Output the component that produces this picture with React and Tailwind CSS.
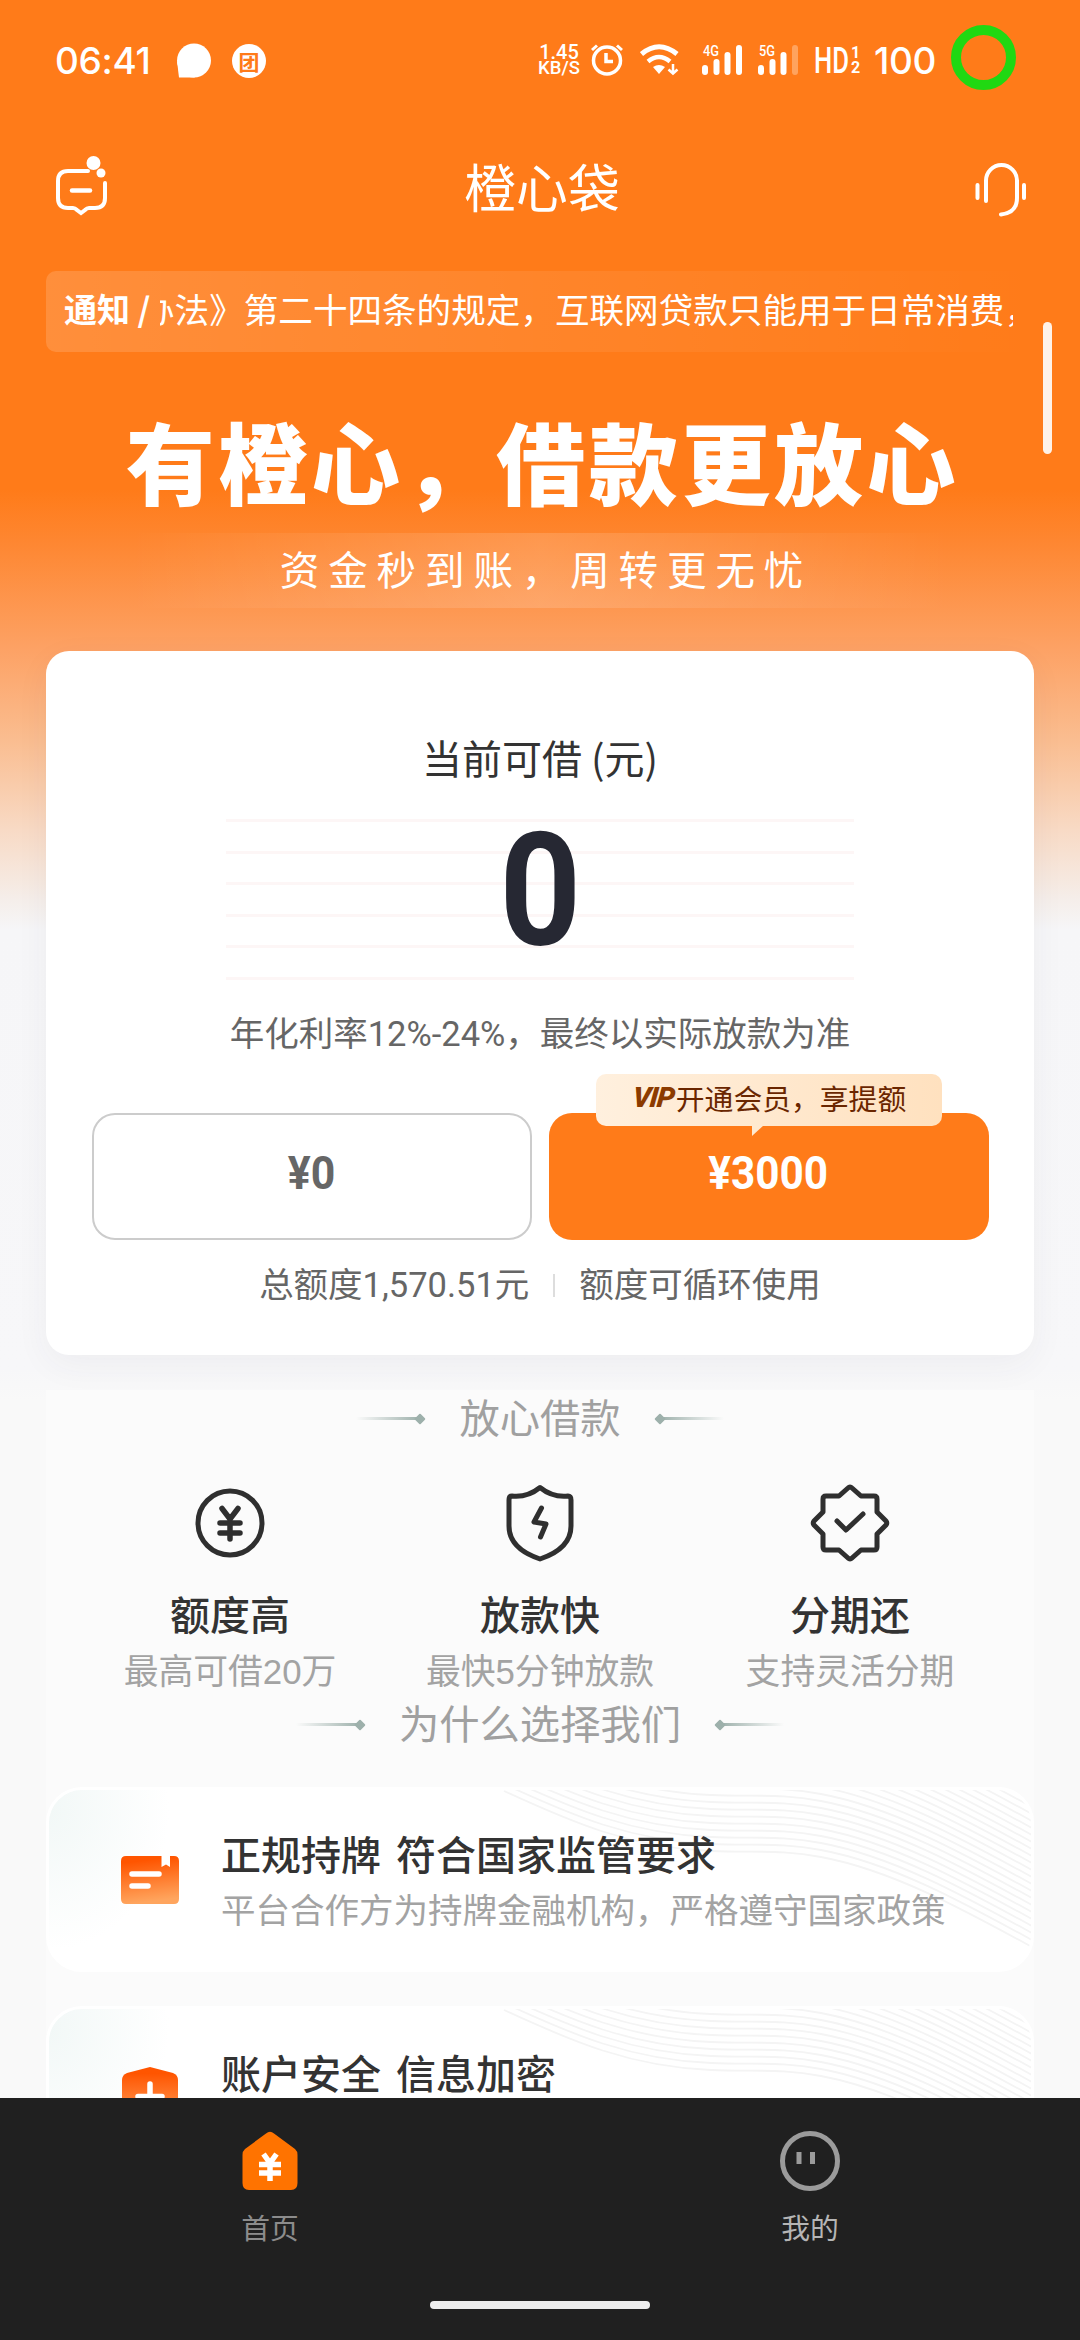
import React from 'react';

const features = [
  { title: '额度高', desc: '最高可借20万', icon: <YenIcon /> },
  { title: '放款快', desc: '最快5分钟放款', icon: <ShieldIcon /> },
  { title: '分期还', desc: '支持灵活分期', icon: <BadgeIcon /> },
];

const reasons = [
  { title: '正规持牌 符合国家监管要求', desc: '平台合作方为持牌金融机构，严格遵守国家政策', icon: <LicenseIcon /> },
  { title: '账户安全 信息加密', icon: <SafeIcon /> },
];

// --- ICONS ---
function YenIcon() {
  return (
    <svg width="80" height="80" viewBox="-40 -40 80 80" fill="none" stroke="#2f2f2f" strokeLinecap="round" strokeLinejoin="round">
      <circle r="32" strokeWidth="5" />
      <path d="M-8 -14.500L0 -4L8 -14.500M0 -4V16M-10 0H10M-10 10H10" strokeWidth="5.500" />
    </svg>
  );
}

function ShieldIcon() {
  return (
    <svg width="80" height="80" viewBox="-40 -40 80 80" fill="none" stroke="#2f2f2f" strokeLinecap="round" strokeLinejoin="round">
      <path d="M0 -35.500C-8 -29 -18 -26 -28 -27Q-31 -27 -31 -23V3C-31 20 -18 30 0 36C18 30 31 20 31 3V-23Q31 -27 28 -27C18 -26 8 -29 0 -35.500Z" strokeWidth="5" />
      <path d="M1.500 -15L-6 -1L6 1L0.500 14" strokeWidth="5" />
    </svg>
  );
}

function BadgeIcon() {
  return (
    <svg width="80" height="80" viewBox="-40 -40 80 80" fill="none" stroke="#2f2f2f" strokeLinecap="round" strokeLinejoin="round">
      <path d="M-2 -35Q0 -37 2 -35L11 -27H24Q27 -27 27 -24V-11L36 -2Q37.500 0 36 2L27 11V24Q27 27 24 27H11L2 35Q0 37 -2 35L-11 27H-24Q-27 27 -27 24V11L-36 2Q-37.500 0 -36 -2L-27 -11V-24Q-27 -27 -24 -27H-11Z" strokeWidth="5" />
      <path d="M-13 -2L-4 7L13 -9" strokeWidth="5" />
    </svg>
  );
}

function LicenseIcon() {
  return (
    <svg width="58" height="48" viewBox="0 0 58 48">
      <defs>
        <linearGradient id="license" x1="0" y1="0" x2="0.15" y2="1">
          <stop offset="0.15" stopColor="#ff5500" />
          <stop offset="1" stopColor="#ffa55e" />
        </linearGradient>
      </defs>
      <path d="M5 0H40.500V11L45 8.500L49 11V0H53Q58 0 58 5V43Q58 48 53 48H5Q0 48 0 43V5Q0 0 5 0Z" fill="url(#license)" />
      <path d="M11 18H38M11 30H27" stroke="#fff" strokeWidth="5.500" strokeLinecap="round" />
    </svg>
  );
}

function SafeIcon() {
  return (
    <svg className="-mt-[8px]" width="56" height="64" viewBox="0 0 56 64">
      <defs>
        <linearGradient id="safe" x1="0" y1="0" x2="0" y2="1">
          <stop offset="0.1" stopColor="#ff5500" />
          <stop offset="1" stopColor="#ffb070" />
        </linearGradient>
      </defs>
      <path d="M28 0L51 6Q56 8 56 13V36Q54 54 28 64Q2 54 0 36V13Q0 8 5 6Z" fill="url(#safe)" />
      <path d="M28 17V42M16 29.500H40" stroke="#fff" strokeWidth="5.500" strokeLinecap="round" />
    </svg>
  );
}

// --- STATUS BAR ---
const Signal = ({ label, weak }) => (
  <svg width="41" height="30" viewBox="0 0 41 30" fill="#fff">
    <text x="1" y="11" fontSize="14" fontWeight="500" fontFamily="Roboto, sans-serif" textLength="16" lengthAdjust="spacingAndGlyphs">{label}</text>
    <rect x="0" y="20" width="6" height="10" rx="3" />
    <rect x="11.500" y="14" width="6" height="16" rx="3" />
    <rect x="22.500" y="7" width="6" height="23" rx="3" />
    <rect x="34" y="0" width="6" height="30" rx="3" opacity={weak ? 0.3 : 1} />
  </svg>
);

const StatusBar = () => (
  <div className="flex h-[115px] shrink-0 items-start pl-[55px] text-white">
    <div className="mt-[38px] w-[121px] font-[Inter,sans-serif] text-[37px] leading-[46px] font-medium tracking-[-0.3px]">06:41</div>
    <svg className="mt-[43px]" width="35" height="36" viewBox="0 0 35 36" fill="#fff">
      <circle cx="18" cy="17.500" r="17" />
      <path d="M1 18L3 34.500L19 34.500Z" />
    </svg>
    <div className="mt-[44px] ml-[21px] flex h-[34px] w-[34px] items-center justify-center rounded-full bg-white text-[21px] leading-[30px] font-bold text-[#ff7b19]">团</div>

    <div className="mt-[44px] ml-[272px] flex w-[42px] flex-col items-center font-[Roboto,sans-serif] text-[20px] leading-[16px] font-medium">
      <span>1.45</span>
      <span className="text-[18.5px]">KB/S</span>
    </div>
    <svg className="mt-[44px] ml-[11px]" width="32" height="32" viewBox="0 0 32 32" fill="none" stroke="#fff">
      <circle cx="16" cy="16.500" r="13.500" strokeWidth="3.500" />
      <path d="M15 9V17.500H22" strokeWidth="3.500" />
      <path d="M1 6L6 1.500M31 6L26 1.500" strokeWidth="3" />
    </svg>
    <svg className="mt-[44px] ml-[17px]" width="40" height="32" viewBox="0 0 40 32" fill="none" stroke="#fff">
      <path d="M1.500 10Q19 -4.500 37 10" strokeWidth="5" />
      <path d="M8 17.500Q19 8.500 30 17.500" strokeWidth="4.500" />
      <path d="M13 23Q19 19 25 23L19 30Z" fill="#fff" stroke="none" />
      <path d="M33 20V29M28.500 25.500L33 29.500L37.500 25.500" strokeWidth="2.500" />
    </svg>
    <div className="mt-[45px] ml-[22px] flex gap-[15px]">
      <Signal label="4G" />
      <Signal label="5G" weak />
    </div>
    <svg className="mt-[44px] ml-[15px]" width="46" height="32" viewBox="0 0 46 32" fill="#fff" fontFamily="Roboto, sans-serif" fontWeight="500">
      <text x="0" y="28.500" fontSize="36" textLength="35" lengthAdjust="spacingAndGlyphs">HD</text>
      <text x="37" y="13.500" fontSize="16" fontWeight="700">1</text>
      <text x="37" y="29" fontSize="16" fontWeight="700">2</text>
    </svg>
    <div className="mt-[38px] ml-[14px] w-[65px] font-[Inter,sans-serif] text-[37px] leading-[46px] font-medium tracking-[-0.4px]">100</div>
    <div className="mt-[25px] ml-[12px] h-[65px] w-[65px] rounded-full border-[10px] border-[#20d812]"></div>
  </div>
);

const Header = () => (
  <div className="flex h-[156px] shrink-0 items-start justify-between pr-[53px] pl-[55px] text-white">
    <svg className="mt-[40px]" width="54" height="61" viewBox="0 0 54 61" fill="none" stroke="#fff" strokeWidth="4" strokeLinecap="round">
      <path d="M33 16H13Q3 16 3 26V43Q3 53 13 53H18Q20 53 22 55L26 58L30 55Q32 53 34 53H40Q50 53 50 43V28" />
      <path d="M17 35.500H35" strokeWidth="4.500" />
      <circle cx="38.500" cy="8" r="7" fill="#fff" stroke="none" />
      <circle cx="46" cy="18" r="4.500" fill="#fff" stroke="none" />
    </svg>
    <h1 className="mt-[33px] text-[51.8px] leading-[76px]">橙心袋</h1>
    <svg className="mt-[48px]" width="52" height="55" viewBox="0 0 52 55" fill="none" stroke="#fff" strokeWidth="4" strokeLinecap="round">
      <path d="M11 38V17.500A15 15 0 0 1 42 17.500V35Q42 50 26 51.500" />
      <path d="M2.500 22V35M49 22V35" />
    </svg>
  </div>
);

const Notice = () => (
  <div className="mx-[46px] flex h-[81px] shrink-0 rounded-[10px] bg-linear-to-r from-white/15 to-white/0 pl-[18px] text-white">
    <div className="w-[96px] shrink-0 text-[33px] leading-[74px] font-bold whitespace-nowrap">通知 /</div>
    <div className="w-[853px] overflow-hidden">
      <p className="-ml-[20px] text-[34.6px] leading-[74px] whitespace-nowrap">办法》第二十四条的规定，互联网贷款只能用于日常消费，</p>
    </div>
  </div>
);

const Banner = () => (
  <div className="flex h-[299px] shrink-0 flex-col items-center text-white">
    <h2 className="mt-[43px] h-[138px] pl-[5px] text-[89px] leading-[130px] font-black tracking-[3.6px] whitespace-nowrap">有橙心，借款更放心</h2>
    <div className="h-[75px] w-[820px] bg-linear-to-r from-white/0 via-white/15 to-white/0 text-center">
      <p className="pl-[12px] text-[39.5px] leading-[70px] tracking-[8.9px]">资金秒到账，周转更无忧</p>
    </div>
  </div>
);

const QuotaCard = () => (
  <div className="mx-[46px] flex h-[704px] shrink-0 flex-col items-center rounded-[23px] bg-white pt-[76px] shadow-[0_10px_34px_rgba(60,60,80,0.05)]">
    <div className="h-[92px] text-[40px] leading-[60px] text-[#333]">当前可借 (元)</div>
    <div className="flex h-[163px] w-[628px] justify-center bg-[repeating-linear-gradient(to_bottom,#fdf6f6_0,#fdf6f6_3px,transparent_3px,transparent_31.6px)]">
      <span className="-mt-[9px] scale-x-[0.9] font-[Roboto,sans-serif] text-[158px] leading-[160px] font-bold text-[#262833]">0</span>
    </div>
    <p className="mt-[26px] font-[Roboto,'Noto_Sans_CJK_SC',sans-serif] text-[34.5px] leading-[52px] text-[#666]">年化利率12%-24%，最终以实际放款为准</p>
    <div className="mt-[53px] flex gap-[17px]">
      <button className="h-[127px] w-[440px] rounded-[23px] border-2 border-[#ccc] pb-[7px] text-[#666]">
        <span className="inline-block scale-x-[0.93] font-[Roboto,sans-serif] text-[46px] font-bold">¥0</span>
      </button>
      <button className="relative h-[127px] w-[440px] rounded-[23px] bg-[#ff7b19] pb-[7px] text-white">
        <span className="inline-block scale-x-[0.92] font-[Roboto,sans-serif] text-[46px] font-bold">¥3000</span>
        <span className="absolute -top-[39px] left-[47px] flex h-[52px] w-[346px] items-center justify-center rounded-[10px] bg-linear-to-r from-[#fff0de] to-[#ffe1bf] pb-[5px] text-[28.8px] leading-[47px] whitespace-nowrap text-[#6a2600]">
          <b className="w-[45px] -skew-x-6 font-[Roboto,sans-serif] text-[28px] font-black tracking-[-1px] text-[#8c3b00] italic">VIP</b>
          开通会员，享提额
          <svg className="absolute top-[51px] left-[156px]" width="12" height="11" viewBox="0 0 12 11" fill="#ffe9d0">
            <path d="M0 0H12L0 11Z" />
          </svg>
        </span>
      </button>
    </div>
    <div className="mt-[19px] flex items-center font-[Roboto,'Noto_Sans_CJK_SC',sans-serif] text-[34.5px] leading-[52px] text-[#666]">
      <span>总额度1,570.51元</span>
      <span className="mx-6 h-[23px] w-[2px] bg-[#ddd]"></span>
      <span>额度可循环使用</span>
    </div>
  </div>
);

const SectionTitle = ({ children }) => (
  <div className="flex h-[57px] items-center justify-center gap-[35px] text-[40.3px] leading-[60px] text-[#a0a0a0]">
    <TitleMark />
    <span className="pb-[6px]">{children}</span>
    <TitleMark flip />
  </div>
);

const TitleMark = ({ flip }) => (
  <div className={flip ? 'flex rotate-180 items-center' : 'flex items-center'}>
    <span className="h-[3px] w-[64px] bg-linear-to-r from-[#9db0ab]/0 to-[#9db0ab]"></span>
    <span className="-ml-[4px] h-[8px] w-[8px] rotate-45 rounded-[1px] bg-[#9db0ab]"></span>
  </div>
);

const Waves = () => (
  <svg className="absolute top-0 right-0" width="540" height="179" viewBox="0 0 540 179" fill="none" stroke="#f4f4f4" strokeWidth="1.800">
    {Array.from({ length: 22 }).map((_, i) => (
      <path key={i} transform={`translate(0 ${-i * 7})`} d="M13 1C80 32 140 58 220 61C260 63 290 59 330 67C400 80 470 118 550 162" />
    ))}
  </svg>
);

const ReasonCard = ({ item }) => (
  <div className="relative flex h-[185px] shrink-0 overflow-hidden rounded-[36px] border-[3px] border-white bg-[radial-gradient(ellipse_120px_140px_at_0_20px,#f2f8f7,#ffffff)]">
    <Waves />
    <div className="relative flex w-[172px] shrink-0 items-start justify-center pt-[66px] pl-[30px]">{item.icon}</div>
    <div className="relative pt-[33px] whitespace-nowrap">
      <h3 className="text-[40px] leading-[60px] font-medium text-[#333] [word-spacing:6px]">{item.title}</h3>
      {item.desc && <p className="text-[34.5px] leading-[50px] text-[#a3a3a3]">{item.desc}</p>}
    </div>
  </div>
);

const NavItem = ({ label, className, children }) => (
  <div className="flex flex-1 flex-col items-center pt-[32px]">
    {children}
    <span className={className}>{label}</span>
  </div>
);

const BottomNav = () => (
  <nav className="h-[242px] shrink-0 bg-[#202020]">
    <div className="flex h-[203px]">
      <NavItem label="首页" className="mt-[15px] text-[28.8px] leading-[40px] text-[#8c8c8c]">
        <svg width="60" height="62" viewBox="0 0 60 62">
          <path d="M26 3.500Q30 0 34 3.500L55 19Q57.500 21 57.500 25V53Q57.500 60 51 60H9Q2.500 60 2.500 53V25Q2.500 21 5 19Z" fill="#ff7300" />
          <path d="M23.500 24L30 33L36.500 24M30 33V51M19 34.500H41M19 43H41" stroke="#fff" strokeWidth="5.500" fill="none" />
        </svg>
      </NavItem>
      <NavItem label="我的" className="mt-[15px] text-[28.8px] leading-[40px] text-[#b5b5b5]">
        <svg width="62" height="62" viewBox="0 0 62 62">
          <circle cx="31" cy="31" r="27.500" fill="none" stroke="#9b9b9b" strokeWidth="5" />
          <path d="M20 22V34M33.500 22V34" stroke="#9b9b9b" strokeWidth="5" />
        </svg>
      </NavItem>
    </div>
    <div className="mx-auto h-[8px] w-[220px] rounded-full bg-[#ededed]"></div>
  </nav>
);

export default function App() {
  return (
    <div className="relative flex h-[2340px] w-[1080px] flex-col overflow-hidden bg-[linear-gradient(to_bottom,#ff7b19_490px,#fe8630_540px,#fda265_650px,#fabd90_740px,#f8dac5_830px,#f5eeea_900px,#f6f6f8_930px,#f7f7f9_1370px,#f9f9f9_1400px)] font-['Noto_Sans_CJK_SC',sans-serif]">
      <div className="flex h-[2098px] shrink-0 flex-col overflow-hidden">
        <StatusBar />
        <Header />
        <Notice />
        <Banner />
        <QuotaCard />

        <div className="mx-[46px] mt-[35px] flex shrink-0 flex-col bg-[#fbfbfb]/80">
          <SectionTitle>放心借款</SectionTitle>
          <div className="flex justify-center pt-[36px]">
            {features.map((f) => (
              <div key={f.title} className="flex w-[310px] flex-col items-center">
                {f.icon}
                <h3 className="mt-[20px] text-[40px] leading-[60px] font-medium text-[#333]">{f.title}</h3>
                <p className="mt-[3px] h-[50px] font-['Liberation_Sans','Noto_Sans_CJK_SC',sans-serif] text-[34.8px] leading-[52px] text-[#a3a3a3]">{f.desc}</p>
              </div>
            ))}
          </div>
          <SectionTitle>为什么选择我们</SectionTitle>
          <div className="mt-[34px] flex flex-col gap-[34px]">
            {reasons.map((r) => (
              <ReasonCard key={r.title} item={r} />
            ))}
          </div>
        </div>
      </div>
      <BottomNav />

      {/* scroll indicator */}
      <div className="absolute top-[322px] right-[28px] h-[132px] w-[9px] rounded-full bg-white/90"></div>
    </div>
  );
}
